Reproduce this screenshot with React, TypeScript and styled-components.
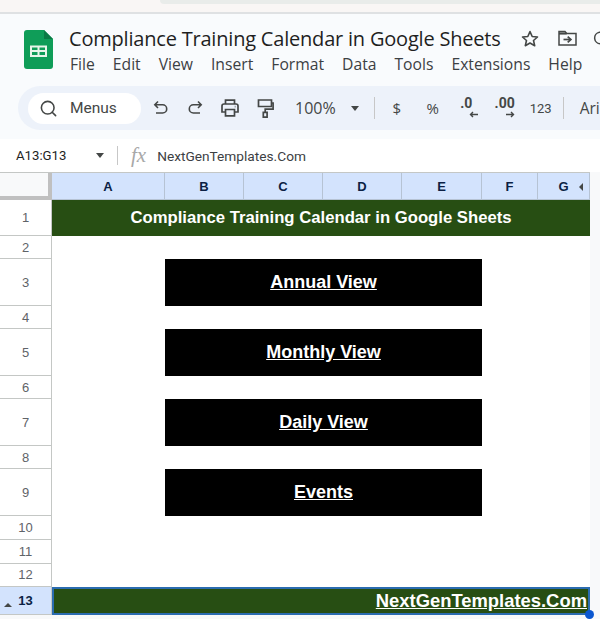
import React from "react";
import styled, { createGlobalStyle } from "styled-components";
import { Search, Cloud } from "lucide-react";

const GlobalStyle = createGlobalStyle`
  html, body {
    margin: 0;
    padding: 0;
    background: #f9fbfd;
    overflow: hidden;
  }
`;

const COLUMNS = [
  { name: "A", width: 113 },
  { name: "B", width: 79 },
  { name: "C", width: 79 },
  { name: "D", width: 79 },
  { name: "E", width: 80 },
  { name: "F", width: 56 },
  { name: "G", width: 52 },
];

const ROWS = [36, 23, 47, 23, 47, 23, 47, 23, 47, 23.5, 24, 23, 28];
const MENUS = ["File", "Edit", "View", "Insert", "Format", "Data", "Tools", "Extensions", "Help"];
const LINKS = [
  { row: 3, label: "Annual View" },
  { row: 5, label: "Monthly View" },
  { row: 7, label: "Daily View" },
  { row: 9, label: "Events" },
];

const App: React.FC = () => {
  return (
    <Page>
      <GlobalStyle />
      <TopStrip>
        <TopTab />
      </TopStrip>
      <TitleBar>
        <SheetsLogo viewBox="0 0 29 39">
          <path d="M3 0h17l9 9v27a3 3 0 0 1-3 3H3a3 3 0 0 1-3-3V3a3 3 0 0 1 3-3z" fill="#0f9d58" />
          <path d="M20 0l9 9h-9z" fill="#0b7a45" />
          <path
            d="M6 15.5h17v11.5H6z M8 17.5v2.6h5.5v-2.6z M15.5 17.5v2.6H21v-2.6z M8 22v3h5.5v-3z M15.5 22v3H21v-3z"
            fill="#e8f5e9"
            fillRule="evenodd"
          />
        </SheetsLogo>
        <TitleBlock>
          <TitleRow>
            <DocTitle>Compliance Training Calendar in Google Sheets</DocTitle>
            <TitleIcons>
              <svg width="18" height="17" viewBox="0 0 18 17" fill="none" stroke="currentColor" strokeWidth="1.6" strokeLinejoin="round">
                <path d="M9 1.6l2.2 4.9 5.3.5-4 3.5 1.2 5.2L9 13l-4.7 2.7 1.2-5.2-4-3.5 5.3-.5z" />
              </svg>
              <svg width="19" height="16" viewBox="0 0 19 16" fill="none" stroke="currentColor" strokeWidth="1.5">
                <path d="M1 15V1.5h6l1.6 2H18V15z" />
                <path d="M1 3.5h7.6" strokeWidth="2.2" />
                <path d="M5.5 9.5h6.5" strokeWidth="1.7" />
                <path d="M9.7 6.6l3.2 2.9-3.2 2.9" strokeWidth="1.7" />
              </svg>
              <CloudIcon size={20} strokeWidth={1.8} />
            </TitleIcons>
          </TitleRow>
          <MenuRow>
            {MENUS.map((menu) => (
              <MenuItem key={menu}>{menu}</MenuItem>
            ))}
          </MenuRow>
        </TitleBlock>
      </TitleBar>
      <Toolbar>
        <MenuSearch>
          <Search size={19} strokeWidth={2} />
          <span>Menus</span>
        </MenuSearch>
        <ToolIcons>
          <svg width="16" height="16" viewBox="0 0 16 16" fill="none" stroke="currentColor" strokeWidth="1.6">
            <path d="M5 1.5L1.8 4.8 5 8M2 4.8h7.6a4 4 0 0 1 0 8.2H3" />
          </svg>
          <svg width="16" height="16" viewBox="0 0 16 16" fill="none" stroke="currentColor" strokeWidth="1.6">
            <path d="M11 1.5l3.2 3.3L11 8M14 4.8H6.4a4 4 0 0 0 0 8.2H13" />
          </svg>
          <svg width="18" height="18" viewBox="0 0 18 18" fill="none" stroke="currentColor" strokeWidth="1.7">
            <path d="M4.5 5V1.2h9V5" />
            <path d="M4.5 13H1V7a2 2 0 0 1 2-2h12a2 2 0 0 1 2 2v6h-3.5" />
            <path d="M4.5 10.5h9v6.3h-9z" />
            <path d="M13.8 7.6h.6" strokeWidth="1.6" />
          </svg>
          <svg width="17" height="19" viewBox="0 0 17 19" fill="none" stroke="currentColor" strokeWidth="1.7">
            <path d="M1.5 1h13v6.5h-13z" />
            <path d="M14.5 4h1.6v6.2H8.2v3" />
            <path d="M6.3 13.3h3.8v4.8H6.3z" />
          </svg>
        </ToolIcons>
        <Zoom>100%</Zoom>
        <Caret />
        <Divider />
        <Money>$</Money>
        <Percent>%</Percent>
        <Decimal $shift={16} $nudge={5}>
          .0
          <svg width="10" height="7" viewBox="0 0 10 7" fill="none" stroke="currentColor" strokeWidth="1.4">
            <path d="M9 3.5H1.5M4 1L1.5 3.5 4 6" />
          </svg>
        </Decimal>
        <Decimal $shift={10} $nudge={0}>
          .00
          <svg width="10" height="7" viewBox="0 0 10 7" fill="none" stroke="currentColor" strokeWidth="1.4">
            <path d="M1 3.5h7.5M6 1l2.5 2.5L6 6" />
          </svg>
        </Decimal>
        <NumberFormat>123</NumberFormat>
        <EndDivider />
        <FontName>Ari</FontName>
      </Toolbar>
      <FormulaBar>
        <NameBox>A13:G13</NameBox>
        <Caret />
        <Divider />
        <FxMark>fx</FxMark>
        <FormulaText>NextGenTemplates.Com</FormulaText>
      </FormulaBar>
      <SheetArea>
        <Sheet>
          <CornerCell />
          {COLUMNS.map((col) => (
            <ColumnHead key={col.name}>
              {col.name}
              {col.name === "G" && <HiddenMark />}
            </ColumnHead>
          ))}
          {ROWS.map((_, i) => (
            <RowHead key={i} $row={i + 1} $selected={i === 12}>
              {i === 12 && <RowMark />}
              {i + 1}
            </RowHead>
          ))}
          <Banner>Compliance Training Calendar in Google Sheets</Banner>
          {LINKS.map((link) => (
            <LinkButton key={link.label} $row={link.row}>
              {link.label}
            </LinkButton>
          ))}
          <FooterBanner>
            NextGenTemplates.Com
            <Handle />
          </FooterBanner>
        </Sheet>
      </SheetArea>
    </Page>
  );
};

const Page = styled.div`
  width: 600px;
  height: 619px;
  display: flex;
  flex-direction: column;
  overflow: hidden;
  background: #f9fbfd;
  font-family: "Roboto", "Liberation Sans", sans-serif;
  color: #444746;
`;

const TopStrip = styled.div`
  height: 12px;
  flex: none;
  display: flex;
  justify-content: center;
  background: #f9f6f5;
  border-bottom: 2px solid #dfe1e3;
`;

const TopTab = styled.div`
  width: 440px;
  height: 4px;
  margin-left: 160px;
  background: #e9ecea;
  border-radius: 0 0 0 6px;
`;

const TitleBar = styled.header`
  height: 72px;
  flex: none;
  display: flex;
  box-sizing: border-box;
  padding: 12px 0 0 24px;
`;

const SheetsLogo = styled.svg`
  width: 29px;
  height: 39px;
  flex: none;
  margin: 4px 16px 0 0;
`;

const TitleBlock = styled.div`
  display: flex;
  flex-direction: column;
  white-space: nowrap;
`;

const TitleRow = styled.div`
  display: flex;
  align-items: center;
  height: 24px;
`;

const DocTitle = styled.h1`
  margin: 0;
  font-family: "Open Sans", "Liberation Sans", sans-serif;
  font-size: 20px;
  font-weight: 400;
  letter-spacing: -0.2px;
  color: #1f1f1f;
`;

const TitleIcons = styled.div`
  display: flex;
  align-items: center;
  gap: 19px;
  margin-left: 20px;
  color: #444746;
`;

const CloudIcon = styled(Cloud)`
  flex: none;
  margin-left: -3px;
`;

const MenuRow = styled.nav`
  display: flex;
  gap: 18px;
  margin-top: 3px;
  margin-left: 1px;
`;

const MenuItem = styled.span`
  font-family: "Open Sans", "Liberation Sans", sans-serif;
  font-size: 15.7px;
  color: #3c4043;
`;

const Toolbar = styled.div`
  height: 44px;
  flex: none;
  display: flex;
  align-items: center;
  box-sizing: border-box;
  margin-left: 18px;
  padding-left: 10px;
  background: #edf2fa;
  border-radius: 22px 0 0 22px;
`;

const MenuSearch = styled.div`
  width: 113px;
  height: 31px;
  flex: none;
  display: flex;
  align-items: center;
  gap: 12px;
  box-sizing: border-box;
  padding-left: 11px;
  background: #fff;
  border-radius: 16px;
  font-size: 15.5px;
  color: #444746;
  svg {
    flex: none;
  }
`;

const ToolIcons = styled.div`
  display: flex;
  align-items: center;
  gap: 18px;
  margin-left: 12px;
`;

const Zoom = styled.span`
  margin-left: 21px;
  font-family: "Open Sans", "Liberation Sans", sans-serif;
  font-size: 16px;
  color: #444746;
`;

const Caret = styled.span`
  width: 0;
  height: 0;
  flex: none;
  margin-left: 15px;
  border-left: 4.5px solid transparent;
  border-right: 4.5px solid transparent;
  border-top: 5px solid #444746;
`;

const Divider = styled.span`
  width: 1px;
  height: 22px;
  flex: none;
  margin-left: 15px;
  background: #c7c7c7;
`;

const EndDivider = styled(Divider)`
  margin-left: 4px;
`;

const Money = styled.span`
  width: 36px;
  flex: none;
  margin-left: 4px;
  text-align: center;
  font-family: "Open Sans", "Liberation Sans", sans-serif;
  font-size: 15px;
  color: #444746;
`;

const Percent = styled.span`
  width: 36px;
  flex: none;
  text-align: center;
  font-family: "Open Sans", "Liberation Sans", sans-serif;
  font-size: 15px;
  color: #444746;
`;

const Decimal = styled.span<{ $shift: number; $nudge: number }>`
  width: 36px;
  height: 24px;
  flex: none;
  display: flex;
  flex-direction: column;
  align-items: center;
  box-sizing: border-box;
  padding-right: ${(p) => p.$nudge}px;
  font-size: 14px;
  font-weight: 700;
  line-height: 15px;
  color: #444746;
  svg {
    margin-left: ${(p) => p.$shift}px;
  }
`;

const NumberFormat = styled.span`
  width: 36px;
  flex: none;
  text-align: center;
  font-size: 13px;
  color: #444746;
`;

const FontName = styled.span`
  margin-left: 16px;
  font-family: "Open Sans", "Liberation Sans", sans-serif;
  font-size: 15.5px;
  color: #444746;
`;

const FormulaBar = styled.div`
  height: 33px;
  flex: none;
  margin-top: 9px;
  display: flex;
  align-items: center;
  box-sizing: border-box;
  padding-left: 16px;
  background: #fff;
  ${Caret} {
    margin-left: 30px;
  }
  ${Divider} {
    height: 19px;
    margin-left: 13px;
  }
`;

const NameBox = styled.span`
  width: 50px;
  font-size: 13.2px;
  color: #1f1f1f;
`;

const FxMark = styled.span`
  margin-left: 13px;
  font-family: "Liberation Serif", serif;
  font-size: 21px;
  font-style: italic;
  color: #a8a8a8;
`;

const FormulaText = styled.span`
  margin-left: 11px;
  font-size: 13.7px;
  color: #3c4043;
`;

const SheetArea = styled.div`
  flex: 1;
  min-height: 0;
  background: #f8f9fa;
`;

const Sheet = styled.div`
  width: 590px;
  display: grid;
  grid-template-columns: 52px ${COLUMNS.map((c) => `${c.width}px`).join(" ")};
  grid-template-rows: 27px ${ROWS.map((h) => `${h}px`).join(" ")};
  background: #fff;
  border-top: 1px solid #c4c7c5;
  font-family: "Liberation Sans", sans-serif;
`;

const CornerCell = styled.div`
  background: #f8f9fa;
  border-right: 4px solid #c0c0c0;
  border-bottom: 4px solid #c0c0c0;
  box-sizing: border-box;
`;

const ColumnHead = styled.div`
  position: relative;
  display: flex;
  align-items: center;
  justify-content: center;
  box-sizing: border-box;
  background: #d3e3fd;
  border-right: 1px solid #b6c3d4;
  border-bottom: 1px solid #b6c3d4;
  font-size: 13px;
  font-weight: 700;
  color: #0b1f44;
  &:last-of-type {
    border-right: 0;
  }
`;

const HiddenMark = styled.span`
  position: absolute;
  right: 6px;
  top: 10px;
  border-top: 4px solid transparent;
  border-bottom: 4px solid transparent;
  border-right: 4px solid #444746;
`;

const RowHead = styled.div<{ $row: number; $selected?: boolean }>`
  grid-column: 1;
  grid-row: ${(p) => p.$row + 1};
  position: relative;
  display: flex;
  align-items: center;
  justify-content: center;
  box-sizing: border-box;
  background: ${(p) => (p.$selected ? "#d3e3fd" : "#fff")};
  border-right: 1px solid #c4c7c5;
  border-bottom: 1px solid #c4c7c5;
  font-size: 13px;
  font-weight: ${(p) => (p.$selected ? 700 : 400)};
  color: ${(p) => (p.$selected ? "#0b1f44" : "#5f6368")};
`;

const RowMark = styled.span`
  position: absolute;
  left: 4px;
  bottom: 7px;
  border-left: 4px solid transparent;
  border-right: 4px solid transparent;
  border-bottom: 4px solid #444746;
`;

const Banner = styled.div`
  grid-column: 2 / -1;
  grid-row: 2;
  display: flex;
  align-items: center;
  justify-content: center;
  background: #274e13;
  font-size: 16.7px;
  font-weight: 700;
  color: #fff;
`;

const LinkButton = styled.a<{ $row: number }>`
  grid-column: 3 / 7;
  grid-row: ${(p) => p.$row + 1};
  display: flex;
  align-items: center;
  justify-content: center;
  background: #000;
  font-size: 18px;
  font-weight: 700;
  color: #fff;
  text-decoration: underline;
`;

const FooterBanner = styled.div`
  grid-column: 2 / -1;
  grid-row: 14;
  position: relative;
  display: flex;
  align-items: center;
  justify-content: flex-end;
  box-sizing: border-box;
  padding-right: 1px;
  background: #274e13;
  border: 2px solid #2b6cb0;
  font-size: 18.4px;
  font-weight: 700;
  color: #fff;
  text-decoration: underline;
`;

const Handle = styled.span`
  position: absolute;
  right: -6px;
  bottom: -6px;
  width: 9px;
  height: 9px;
  background: #0b57d0;
  border-radius: 50%;
`;

export default App;
